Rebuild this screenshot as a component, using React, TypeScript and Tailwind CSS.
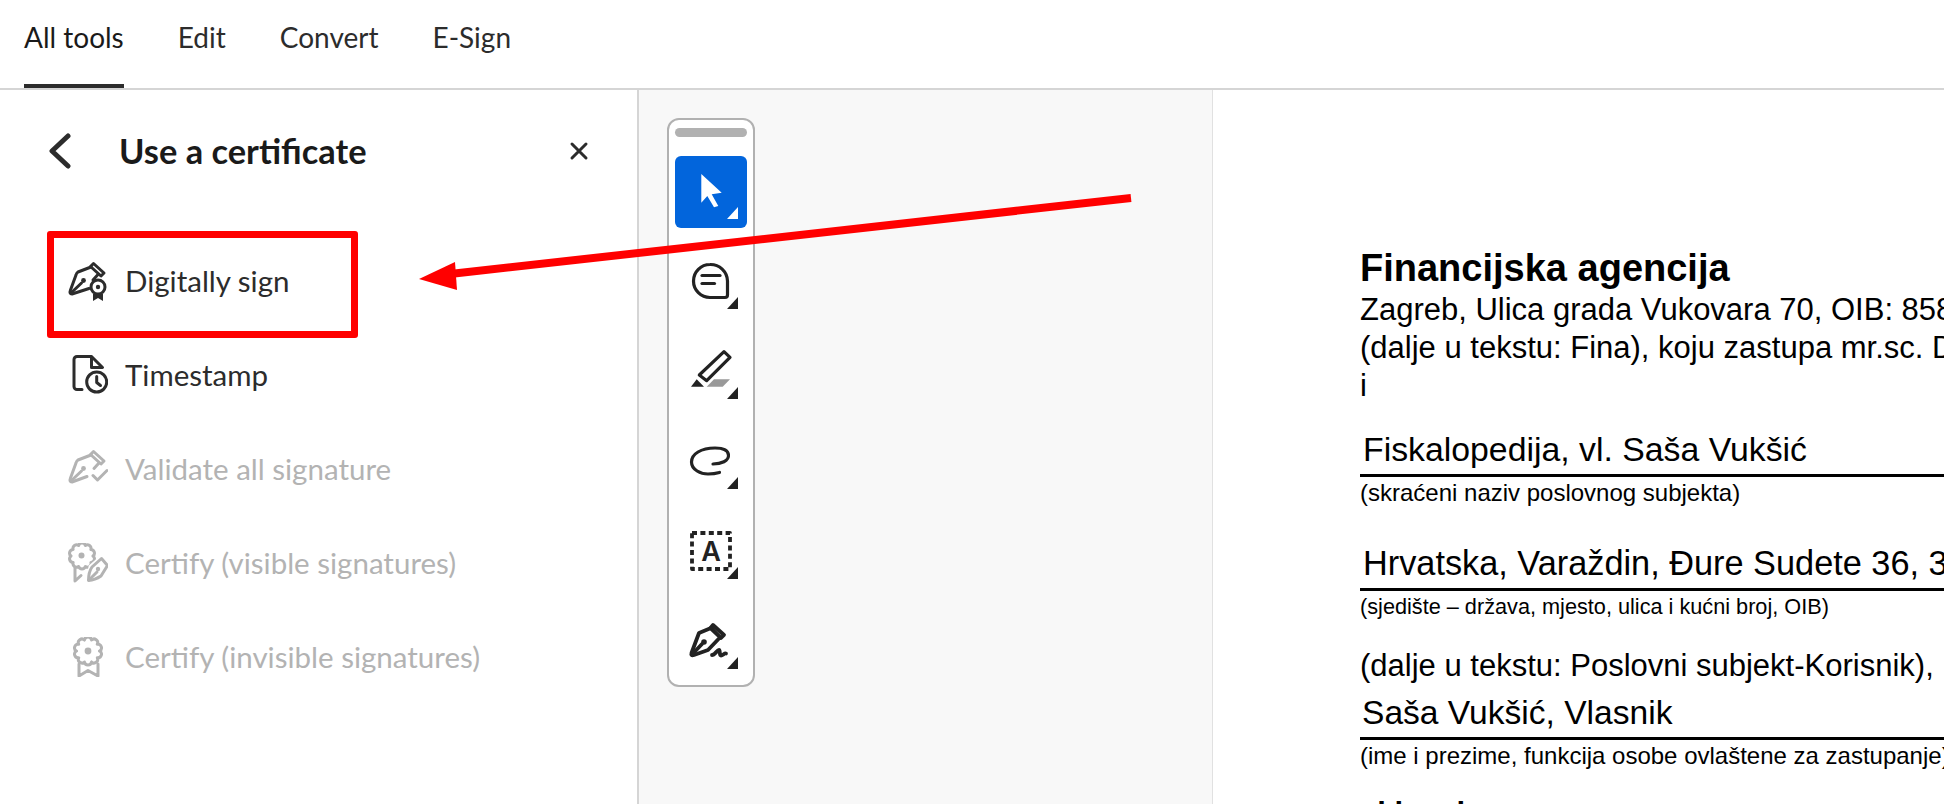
import type { ReactNode } from "react";

const tabs = ["All tools", "Edit", "Convert", "E-Sign"];

// scalloped seal outline used by the certify icons
function seal(cx: number, cy: number, r: number, n: number) {
  let d = "";
  for (let i = 0; i <= n; i++) {
    const a = (i / n) * Math.PI * 2;
    const x = (cx + r * Math.cos(a)).toFixed(2);
    const y = (cy + r * Math.sin(a)).toFixed(2);
    d += i === 0 ? `M${x} ${y}` : ` A3.6 3.6 0 0 1 ${x} ${y}`;
  }
  return d + "Z";
}

function Icon40({ children }: { children: ReactNode }) {
  return (
    <svg
      viewBox="0 0 40 40"
      fill="none"
      stroke="currentColor"
      strokeWidth="3"
      strokeLinecap="round"
      strokeLinejoin="round"
      className="w-10 h-10 shrink-0"
    >
      {children}
    </svg>
  );
}

const Cap = () => <path d="M25.5 2.5 L36 12 L33 15 L22.5 5.5Z" />;

function DigitalSignIcon() {
  return (
    <Icon40>
      <Cap />
      <path d="M23 6 L10 11 Q8.5 12 8 14 L2.5 29 Q1 33 4 33 L21 27.5" />
      <path d="M3 32 L13.5 22" />
      <circle cx="15.5" cy="19.5" r="2.4" fill="currentColor" stroke="none" />
      <path d="M30 13.5 L25 19" />
      <circle cx="30" cy="26" r="7" fill="white" />
      <circle cx="30" cy="26" r="2.2" fill="currentColor" stroke="none" />
      <path d="M25 33 V40 L30 37 L35 40 V33Z" fill="currentColor" stroke="none" />
    </Icon40>
  );
}

function TimestampIcon() {
  return (
    <Icon40>
      <path d="M23 1.5 H9 a3 3 0 0 0 -3 3 V31.5 a3 3 0 0 0 3 3 H14" />
      <path d="M23.5 1.5 L34.5 12.5 H23.5Z" />
      <circle cx="28.7" cy="27" r="10" />
      <path d="M28.7 21.5 V27.5 L32.5 30.5" />
    </Icon40>
  );
}

function ValidateIcon() {
  return (
    <Icon40>
      <Cap />
      <path d="M23 6 L10 11 Q8.5 12 8 14 L2.5 29 Q1 33 4 33 L19 27.5" />
      <path d="M3 32 L13.5 22" />
      <circle cx="15.5" cy="19.5" r="2.4" fill="currentColor" stroke="none" />
      <path d="M30.5 14.5 L26 19.5" />
      <path d="M25 26.5 L29.5 31 L39 21.5" />
    </Icon40>
  );
}

function CertifyVisibleIcon() {
  return (
    <Icon40>
      <path d={seal(14, 13, 11, 10)} />
      <circle cx="13.5" cy="12.5" r="3" fill="currentColor" stroke="none" />
      <path d="M7 25 V38 L13 32.5" />
      <path d="M33.5 15 L40 22 L34 34 L20 38 L23 24Z" fill="white" stroke="white" strokeWidth="5" />
      <path d="M33.5 15.5 L39.5 22.5 L33 33 Q27 37 20.5 37.5 Q20.5 29 24 24Z" />
      <path d="M21 37 L29 29" />
      <circle cx="30" cy="26" r="2.2" fill="currentColor" stroke="none" />
    </Icon40>
  );
}

function CertifyInvisibleIcon() {
  return (
    <Icon40>
      <path d={seal(20, 14, 11.5, 10)} />
      <circle cx="20" cy="14" r="3.4" fill="currentColor" stroke="none" />
      <path d="M11 27 V39 L20 33.5 L30 39 V27" />
    </Icon40>
  );
}

const items = [
  { label: "Digitally sign", icon: DigitalSignIcon, disabled: false },
  { label: "Timestamp", icon: TimestampIcon, disabled: false },
  { label: "Validate all signature", icon: ValidateIcon, disabled: true },
  { label: "Certify (visible signatures)", icon: CertifyVisibleIcon, disabled: true },
  { label: "Certify (invisible signatures)", icon: CertifyInvisibleIcon, disabled: true },
];

function ToolButton({ active, children }: { active?: boolean; children: ReactNode }) {
  return (
    <button
      className={`w-[72px] h-[72px] rounded-md ${active ? "bg-[#0265dc] text-white" : "text-[#222222]"}`}
    >
      <svg
        viewBox="0 0 72 72"
        fill="none"
        stroke="currentColor"
        strokeWidth="3.2"
        strokeLinecap="round"
        strokeLinejoin="round"
        className="w-[72px] h-[72px]"
      >
        {children}
        <polygon points="63,51 63,63 52,63" fill="currentColor" stroke="none" />
      </svg>
    </button>
  );
}

function Toolbar() {
  return (
    <div className="w-[88px] h-[569px] bg-white border-2 border-[#b1b1b1] rounded-xl flex flex-col items-center pt-[8px]">
      <div className="w-[72px] h-[9px] rounded-full bg-[#b1b1b1] mb-[19px]" />
      <div className="flex flex-col gap-[18px]">
        <ToolButton active>
          <polygon
            points="26.3,18 46.7,36.7 36.7,38.3 43.3,50 39,51.3 32.3,40 26.3,46.7"
            fill="currentColor"
            stroke="none"
          />
        </ToolButton>
        <ToolButton>
          <path d="M35 18.5 a16.5 16.5 0 0 0 0 33 h15 a2.5 2.5 0 0 0 2.5 -2.5 V35 a17 17 0 0 0 -17.5 -16.5Z" />
          <path d="M27 29.5 H45" />
          <path d="M27 37.5 H39.5" />
        </ToolButton>
        <ToolButton>
          <polygon points="24.3,39 49,15.7 55,21.3 31.7,44.7" />
          <polygon points="16,50.7 21.7,43.3 29,50.7" fill="currentColor" stroke="none" />
          <polygon points="31.7,50.7 39,43.3 55,43.3 47.7,50.7" fill="#999999" stroke="none" />
        </ToolButton>
        <ToolButton>
          <path d="M38 38 C46 38 54 35 53.5 29 C53 23 46 22 40 22 C26 22 16.5 28 16.5 36 C16.5 44 26 48 33 48 C37 48 41 47.5 44.5 46.5" />
        </ToolButton>
        <ToolButton>
          <rect x="17" y="17" width="38" height="36" strokeWidth="3.8" strokeDasharray="5 3.4" strokeLinecap="butt" />
          <text
            x="36"
            y="44.5"
            textAnchor="middle"
            fontSize="27"
            fontWeight="600"
            fontFamily="Inter, sans-serif"
            fill="currentColor"
            stroke="none"
          >
            A
          </text>
        </ToolButton>
        <ToolButton>
          <g strokeWidth="3.8">
            <path d="M38 19 L49 29 L46 32 L35.5 22Z" />
            <path d="M36 22 L24 27 L16.5 47 Q15.5 50 19 49 L33 44 L43.5 33" />
            <path d="M17.5 48 L27 38" />
            <circle cx="29" cy="36" r="2.8" fill="currentColor" stroke="none" />
            <path d="M37 49 C40 49 42 44 44 44 C45.5 44 44 49.5 46 49.5 C48 49.5 49 47 51 47.5" />
          </g>
        </ToolButton>
      </div>
    </div>
  );
}

function Rule() {
  return <div className="h-[3px] bg-black mt-[6px]" />;
}

function DocPage() {
  return (
    <div className="flex-1 bg-white overflow-hidden pl-[147px] pt-[159px] whitespace-nowrap text-black font-['Liberation_Sans',sans-serif]">
      <h2 className="text-[38px] font-bold leading-[38px]">Financijska agencija</h2>
      <div className="text-[31px] leading-[38px] mt-[4px]">
        <p>Zagreb, Ulica grada Vukovara 70, OIB: 85821130368</p>
        <p>(dalje u tekstu: Fina), koju zastupa mr.sc. Dražen</p>
        <p>i</p>
      </div>
      <p className="text-[33.8px] leading-[38px] mt-[25px] pl-[3px]">Fiskalopedija, vl. Saša Vukšić</p>
      <Rule />
      <p className="text-[24px] leading-[26px] mt-[3px]">(skraćeni naziv poslovnog subjekta)</p>
      <p className="text-[34.3px] leading-[38px] mt-[38px] pl-[3px]">Hrvatska, Varaždin, Đure Sudete 36, 3</p>
      <Rule />
      <p className="text-[21.7px] leading-[26px] mt-[3px]">(sjedište – država, mjesto, ulica i kućni broj, OIB)</p>
      <p className="text-[31px] leading-[38px] mt-[27px]">(dalje u tekstu: Poslovni subjekt-Korisnik),</p>
      <p className="text-[33.6px] leading-[36px] mt-[10px] pl-[2px]">Saša Vukšić, Vlasnik</p>
      <Rule />
      <p className="text-[24px] leading-[26px] mt-[3px]">(ime i prezime, funkcija osobe ovlaštene za zastupanje)</p>
      <p className="text-[31px] font-bold leading-[38px] mt-[26px]">sklapaju</p>
    </div>
  );
}

export default function App() {
  return (
    <div className="relative w-[1944px] h-[804px] overflow-hidden bg-white flex flex-col font-['Lato',sans-serif]">
      {/* Tabs */}
      <header className="h-[90px] shrink-0 border-b-2 border-[#d5d5d5] flex gap-[54px] pl-[24px]">
        {tabs.map((tab, i) => (
          <div
            key={tab}
            className={`h-[88px] flex items-center text-[28px] pb-[10px] border-b-[4px] ${
              i === 0 ? "border-[#2c2c2c] text-[#1a1a1a]" : "border-transparent text-[#2c2c2c]"
            }`}
          >
            {tab}
          </div>
        ))}
      </header>

      <main className="flex-1 flex min-h-0">
        {/* Side panel */}
        <aside className="w-[639px] shrink-0 border-r-2 border-[#d5d5d5]">
          <div className="flex items-center h-[48px] mt-[37px] pl-[47px] pr-[48px]">
            <svg viewBox="0 0 24 36" className="w-[24px] h-[36px] text-[#2c2c2c]" fill="none" stroke="currentColor" strokeWidth="5" strokeLinecap="round" strokeLinejoin="round">
              <path d="M21 3 L5 18 L21 33" />
            </svg>
            <h1 className="ml-[48px] flex-1 text-[34.4px] font-bold text-[#1a1a1a]">Use a certificate</h1>
            <svg viewBox="0 0 20 20" className="w-[20px] h-[20px] text-[#2c2c2c]" fill="none" stroke="currentColor" strokeWidth="3" strokeLinecap="round">
              <path d="M3 3 L17 17 M17 3 L3 17" />
            </svg>
          </div>
          <ul className="mt-[59px]">
            {items.map((item) => {
              const ItemIcon = item.icon;
              return (
                <li
                  key={item.label}
                  className={`h-[94px] flex items-center gap-[17px] pl-[68px] text-[29.5px] ${
                    item.disabled ? "text-[#b3b3b3]" : "text-[#2c2c2c]"
                  }`}
                >
                  <ItemIcon />
                  <span>{item.label}</span>
                </li>
              );
            })}
          </ul>
        </aside>

        {/* Canvas gutter with quick tools */}
        <section className="w-[574px] shrink-0 bg-[#f8f8f8] border-r border-[#e1e1e1] pl-[28px] pt-[28px]">
          <Toolbar />
        </section>

        <DocPage />
      </main>

      {/* Red annotation over the screenshot */}
      <div className="absolute left-[47px] top-[231px] w-[311px] h-[107px] border-[7px] border-[#ff0000] rounded-[3px]" />
      <svg className="absolute inset-0 w-full h-full pointer-events-none" viewBox="0 0 1944 804">
        <line x1="1131" y1="198" x2="450" y2="274" stroke="#ff0000" strokeWidth="8" />
        <polygon points="419,279 455,262 457,290" fill="#ff0000" />
      </svg>
    </div>
  );
}
